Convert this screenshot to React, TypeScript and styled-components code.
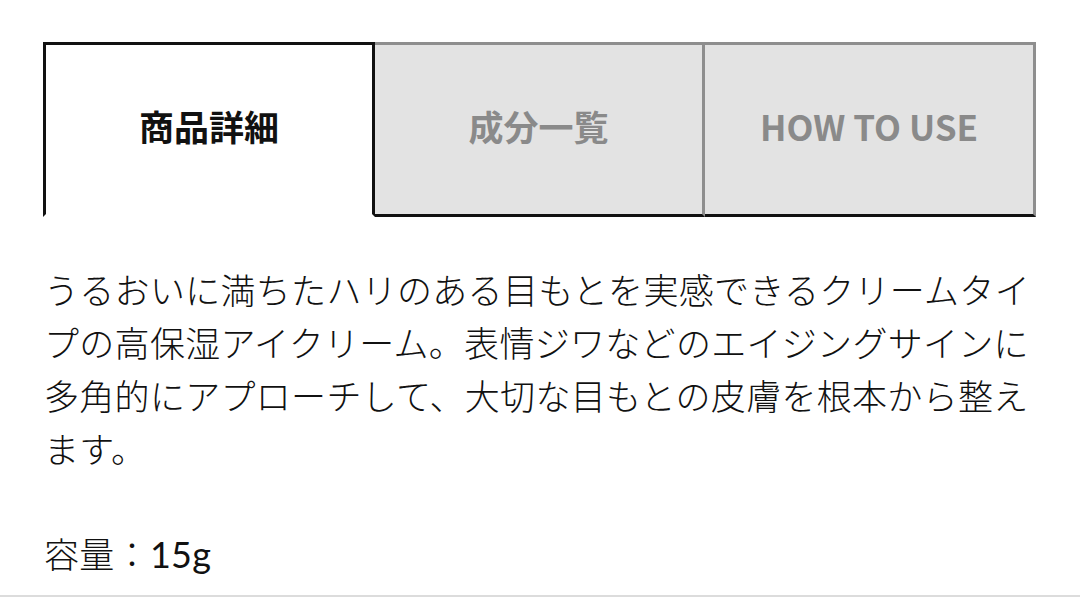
import React from "react";
import styled, { createGlobalStyle } from "styled-components";

const GlobalStyle = createGlobalStyle`
    html, body {
        margin: 0;
        padding: 0;
        background: #ffffff;
    }
    body {
        font-family: "Lato", "Noto Sans CJK JP", sans-serif;
        color: #111111;
    }
`

const tabs = ["商品詳細", "成分一覧", "HOW TO USE"]

export default function App() {
    return (
        <>
            <GlobalStyle />
            <Page>
                <TabBar>
                    {tabs.map((label, i) => (
                        <Tab key={label} active={i === 0}>
                            {label}
                        </Tab>
                    ))}
                </TabBar>
                <Body>
                    <Text>
                        うるおいに満ちたハリのある目もとを実感できるクリームタイプの高保湿アイクリーム。表情ジワなどのエイジングサインに多角的にアプローチして、大切な目もとの皮膚を根本から整えます。
                    </Text>
                    <Text>
                        容量：<Amount>15g</Amount>
                    </Text>
                </Body>
            </Page>
        </>
    )
}

const Page = styled.div`
    padding: 42px 44px 0 43px;
    border-bottom: 2px solid #dcdcdc;
`

const TabBar = styled.div`
    display: grid;
    grid-template-columns: 332px 330px 331px;
`

const Tab = styled.div<{ active?: boolean }>`
    height: 175px;
    box-sizing: border-box;
    padding-bottom: 8px;
    display: flex;
    align-items: center;
    justify-content: center;
    font-family: "Noto Sans CJK JP", sans-serif;
    font-weight: 700;
    font-size: 35px;
    color: ${p => (p.active ? "#111111" : "#8a8a8a")};
    background: ${p => (p.active ? "#ffffff" : "#e3e3e3")};
    border-top: 3px solid ${p => (p.active ? "#111111" : "#8e8e8e")};
    border-left: 3px solid ${p => (p.active ? "#111111" : "transparent")};
    border-right: 3px solid ${p => (p.active ? "#111111" : "#8e8e8e")};
    border-bottom: 3px solid ${p => (p.active ? "transparent" : "#111111")};

    & + & {
        border-left: none;
    }
`

const Body = styled.div`
    padding: 47px 0 14px 1px;
    display: flex;
    flex-direction: column;
    gap: 52px;
`

const Text = styled.p`
    margin: 0;
    font-size: 35px;
    font-weight: 300;
    line-height: 53px;
    letter-spacing: 0.3px;
`

const Amount = styled.span`
    font-weight: 400;
    font-size: 36px;
`
